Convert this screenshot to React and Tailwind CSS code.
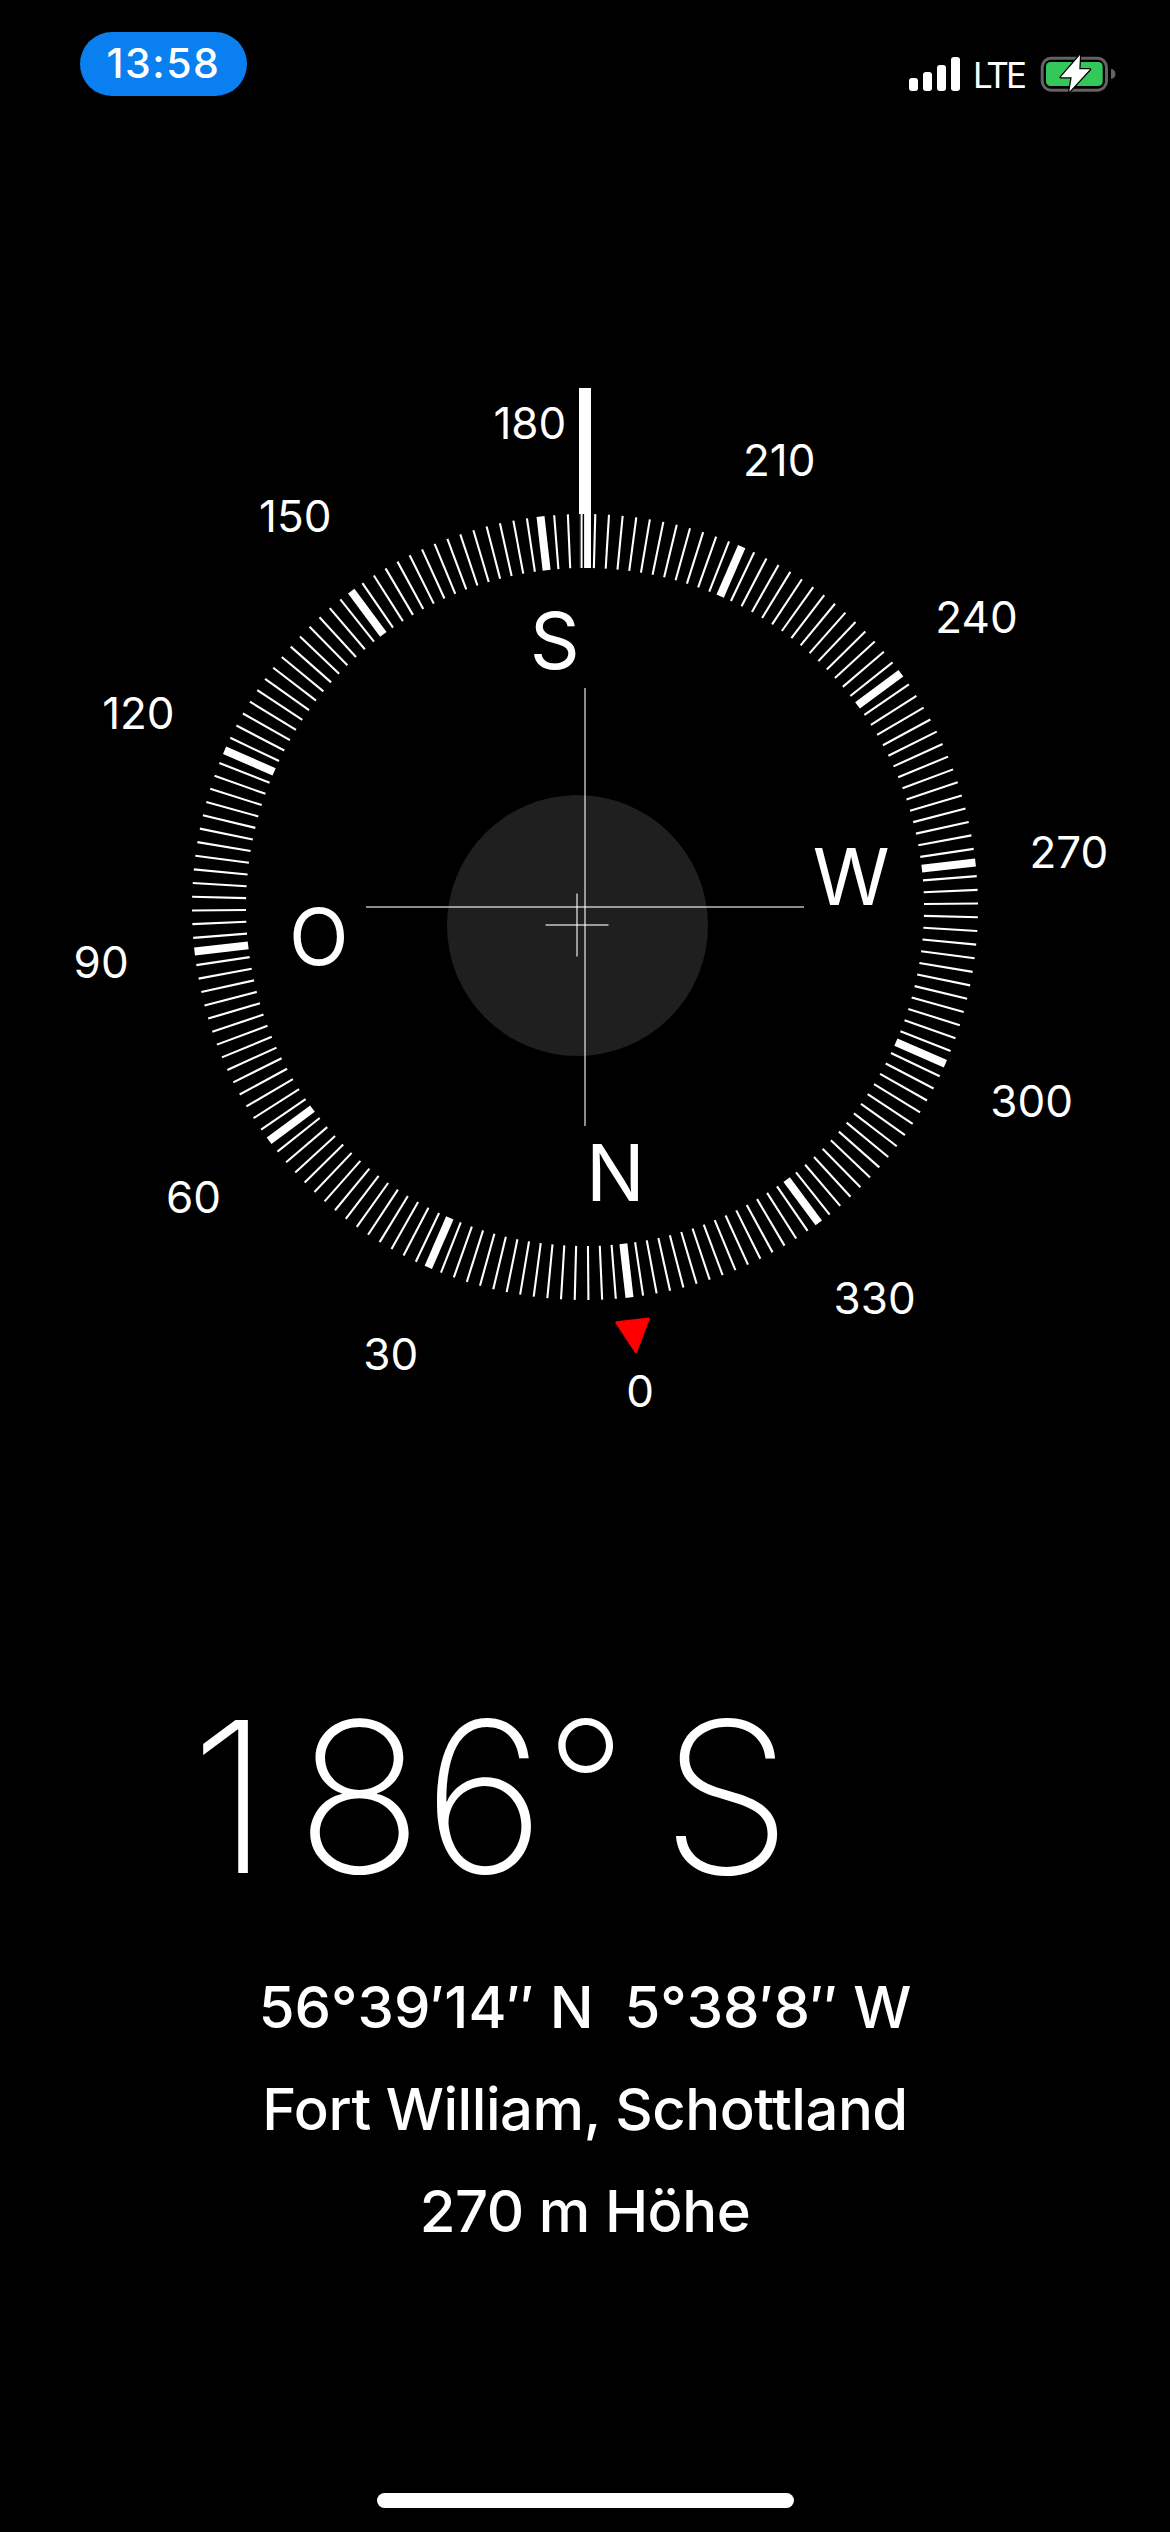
const ROT = 186.5;
const CX = 585;
const CY = 767;

function polar(deg, r) {
  const a = ((deg - ROT) * Math.PI) / 180;
  return [CX + r * Math.sin(a), CY - r * Math.cos(a)];
}

const degrees = Array.from({ length: 180 }, (_, i) => i * 2);
const labels = [0, 30, 60, 90, 120, 150, 180, 210, 240, 270, 300, 330];
const cardinals = [
  ["N", 0],
  ["O", 90],
  ["S", 180],
  ["W", 270],
];

function Dial() {
  return (
    <svg className="absolute left-0 top-0" width="1170" height="1360" viewBox="0 0 1170 1360">
      <rect x="579" y="248" width="12" height="180" fill="#fff" />
      {degrees.map((d) => {
        const [x1, y1] = polar(d, 339);
        const [x2, y2] = polar(d, 393);
        const major = d % 30 === 0;
        return (
          <line
            key={d}
            x1={x1}
            y1={y1}
            x2={x2}
            y2={y2}
            stroke="#fff"
            strokeWidth={major ? 8 : 2.1}
          />
        );
      })}
      <line x1="581.6" y1="374" x2="581.6" y2="428" stroke="#000" strokeWidth="5" />
      <line x1="581.6" y1="374" x2="581.6" y2="428" stroke="#fff" strokeWidth="2" />
      <polygon
        points="616.5,1182.5 648.5,1178.8 636,1212"
        fill="#f00"
        stroke="#f00"
        strokeWidth="2.5"
        strokeLinejoin="round"
      />
      <g fill="#fff" fillOpacity="0.55">
        <rect x="584" y="548" width="2" height="438" />
        <rect x="366" y="766" width="438" height="2" />
        <rect x="576" y="753.5" width="2" height="63" />
        <rect x="545.5" y="784" width="63" height="2" />
      </g>
    </svg>
  );
}

function DialText({ text, deg, r, className }) {
  const [x, y] = polar(deg, r);
  return (
    <div
      className={`absolute -translate-x-1/2 -translate-y-1/2 leading-none text-white ${className}`}
      style={{ left: x, top: y }}
    >
      {text}
    </div>
  );
}

function Battery() {
  return (
    <svg width="76" height="38" viewBox="0 0 76 38" className="ml-[15px] overflow-visible">
      <rect x="3.2" y="2.2" width="64.3" height="32" rx="9" fill="none" stroke="#636363" strokeWidth="3" />
      <rect x="7" y="6" width="56.7" height="24" rx="4.5" fill="#34c759" />
      <path d="M72 13a4.500 5 0 0 1 0 10z" fill="#636363" />
      <path
        d="M41 -1 L21.700 21.300 L32.700 21.300 L30.300 35.700 L51 13.300 L40.300 13.300 Z"
        fill="#fff"
        stroke="#000"
        strokeWidth="2.500"
        strokeLinejoin="round"
        paintOrder="stroke"
      />
    </svg>
  );
}

function StatusBar() {
  return (
    <div className="flex h-[140px] items-start justify-between pl-[80px] pr-[55px] pt-[32px]">
      <div className="flex h-[64px] w-[167px] items-center justify-center rounded-[32px] bg-[#0a7ff0] text-[41px] font-[450] tracking-[1.500px] text-white">
        13:58
      </div>
      <div className="mt-[24px] flex h-[38px] items-center">
        <div className="mb-[2px] mr-[13px] flex h-[34px] items-end gap-[5.500px]">
          <div className="h-[13px] w-[8.500px] rounded-[3px] bg-white" />
          <div className="h-[19px] w-[8.500px] rounded-[3px] bg-white" />
          <div className="h-[26px] w-[8.500px] rounded-[3px] bg-white" />
          <div className="h-[34px] w-[8.500px] rounded-[3px] bg-white" />
        </div>
        <div className="text-[35px] font-normal leading-none tracking-[-3px] text-white">LTE</div>
        <Battery />
      </div>
    </div>
  );
}

export default function App() {
  return (
    <div className="flex h-[2532px] w-[1170px] flex-col overflow-hidden bg-black font-['Inter',sans-serif]">
      <StatusBar />
      <div className="relative h-[1360px] shrink-0">
        <div className="absolute left-[446.500px] top-[654.500px] h-[261px] w-[261px] rounded-full bg-[#1f1f1f]" />
        <Dial />
        {labels.map((d) => (
          <DialText key={d} text={d} deg={d} r={487} className="text-[44px] font-normal" />
        ))}
        {cardinals.map(([t, d]) => (
          <DialText key={t} text={t} deg={d} r={268} className="text-[78px] font-normal" />
        ))}
      </div>
      <div className="mt-[195px] h-[204px] whitespace-pre pl-[190px] text-[210px] font-extralight leading-[204px] text-white [word-spacing:-24px]">
        <span className="mr-[26px]">1</span>
        <span>8</span>
        <span>6</span>
        <span className="text-[178px] leading-[0] [vertical-align:24px]">°</span> S
      </div>
      <div className="mt-[57px] flex flex-col items-center text-[58px] font-medium leading-[102px] tracking-[-0.450px] text-white">
        <div className="whitespace-pre tracking-[0px]">56°39′14″ N  5°38′8″ W</div>
        <div>Fort William, Schottland</div>
        <div>270 m Höhe</div>
      </div>
      <div className="mx-auto mt-auto mb-[24px] h-[15px] w-[417px] rounded-full bg-white" />
    </div>
  );
}
